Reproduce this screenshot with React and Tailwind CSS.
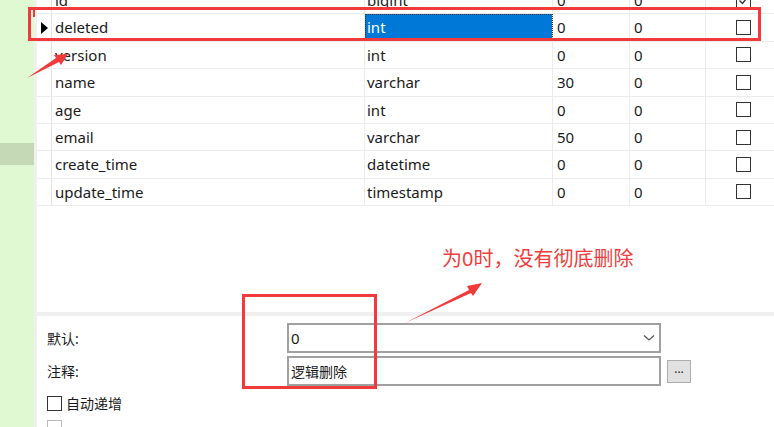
import React from 'react'

const rows = [
  { name: 'id', type: 'bigint', len: '0', dec: '0', checked: true },
  { name: 'deleted', type: 'int', len: '0', dec: '0', current: true },
  { name: 'version', type: 'int', len: '0', dec: '0' },
  { name: 'name', type: 'varchar', len: '30', dec: '0' },
  { name: 'age', type: 'int', len: '0', dec: '0' },
  { name: 'email', type: 'varchar', len: '50', dec: '0' },
  { name: 'create_time', type: 'datetime', len: '0', dec: '0' },
  { name: 'update_time', type: 'timestamp', len: '0', dec: '0' },
]

function Check({ checked }) {
  return (
    <div className="w-[15px] h-[15px] border border-[#333] bg-white flex items-center justify-center">
      {checked && (
        <svg width="11" height="11" viewBox="0 0 11 11">
          <path d="M1.5 5.5 L4.5 8.5 L9.5 2" stroke="#333" strokeWidth="1.4" fill="none" />
        </svg>
      )}
    </div>
  )
}

function Row({ r }) {
  return (
    <div className="flex h-[27.4px] border-b border-[#ececec]">
      <div className="w-[15px] border-r border-[#e4e4e4] flex items-center justify-center">
        {r.current && (
          <svg width="8" height="12" viewBox="0 0 8 12">
            <path d="M1 0 L8 6 L1 12 Z" fill="#000" />
          </svg>
        )}
      </div>
      <div className="w-[313px] border-r border-[#ececec] pl-[3px] flex items-center">{r.name}</div>
      <div
        className={
          'w-[188px] border-r border-[#ececec] pl-[2px] flex items-center ' +
          (r.current ? 'bg-[#0078d7] text-white outline-1 outline-dotted outline-[#333] -outline-offset-1' : '')
        }
      >
        {r.type}
      </div>
      <div className="w-[77px] border-r border-[#ececec] pl-[4px] flex items-center">{r.len}</div>
      <div className="w-[76px] border-r border-[#ececec] pl-[4px] flex items-center">{r.dec}</div>
      <div className="flex-1 flex items-center pl-[30px]">
        <Check checked={r.checked} />
      </div>
    </div>
  )
}

export default function App() {
  return (
    <div
      className="relative w-[774px] h-[427px] overflow-hidden flex bg-white text-[15px] text-[#1a1a1a]"
      style={{ fontFamily: '"Noto Sans", "Noto Sans CJK SC", sans-serif' }}
    >
      {/* left tree strip */}
      <div className="w-[34px] bg-[#e1f9d2] flex flex-col">
        <div className="h-[143px]" />
        <div className="h-[22px] bg-[#c6d9b6]" />
      </div>
      <div className="w-[3px] bg-[#f0f0f0]" />

      <div className="flex-1 flex flex-col min-h-0">
        {/* fields grid */}
        <div className="h-[312px] shrink-0 overflow-hidden">
          <div className="-mt-[13px]">
            {rows.map((r) => (
              <Row key={r.name} r={r} />
            ))}
          </div>
        </div>
        <div className="h-[4px] shrink-0 bg-[#f0f0f0]" />

        {/* property panel */}
        <div className="flex-1 min-h-0 overflow-hidden pl-[10px] pt-[7px]">
          <div className="flex items-center h-[30px]">
            <div className="w-[240px] text-[14px]">默认:</div>
            <div className="w-[374px] h-[30px] border-2 border-[#a0a0a0] flex items-center pl-[2px] pr-[4px] justify-between">
              <span>0</span>
              <svg width="12" height="8" viewBox="0 0 12 8">
                <path d="M1 1.5 L6 6 L11 1.5" stroke="#555" strokeWidth="1.3" fill="none" />
              </svg>
            </div>
          </div>
          <div className="flex items-center h-[30px] mt-[3px]">
            <div className="w-[240px] text-[14px]">注释:</div>
            <div className="w-[374px] h-[30px] border-2 border-[#a0a0a0] flex items-center pl-[2px] text-[14px]">
              逻辑删除
            </div>
            <div className="ml-[6px] w-[24px] h-[23px] bg-[#e1e1e1] border border-[#adadad] flex items-center justify-center text-[12px] leading-none pb-[4px]">
              ...
            </div>
          </div>
          <div className="flex items-center mt-[4px] h-[26px]">
            <div className="w-[15px] h-[15px] border border-[#333] mr-[4px]" />
            <span className="text-[14px]">自动递增</span>
          </div>
          <div className="mt-[4px] w-[15px] h-[15px] border border-[#bbb]" />
        </div>
      </div>

      {/* annotations */}
      <div className="absolute left-[28px] top-[7px] w-[733px] h-[34px] border-[3px] border-[#f23a3a]" />
      <div className="absolute left-[33px] top-[10px] w-[2px] h-[7px] bg-[#f23a3a]" />
      <div className="absolute left-[242px] top-[294px] w-[135px] h-[95px] border-[3px] border-[#f23a3a]" />
      <div className="absolute left-[442px] top-[244px] text-[20px] text-[#f03c3c]">为0时，没有彻底删除</div>
      <svg className="absolute left-0 top-0" width="774" height="427">
        <path d="M27 78 L56 58 L54 55 L68 54 L61 65 L59 62 Z" fill="#f23a3a" />
        <path d="M405 323 L469 290 L467 286 L482 283 L473 296 L471 293 Z" fill="#f23a3a" />
      </svg>
    </div>
  )
}
